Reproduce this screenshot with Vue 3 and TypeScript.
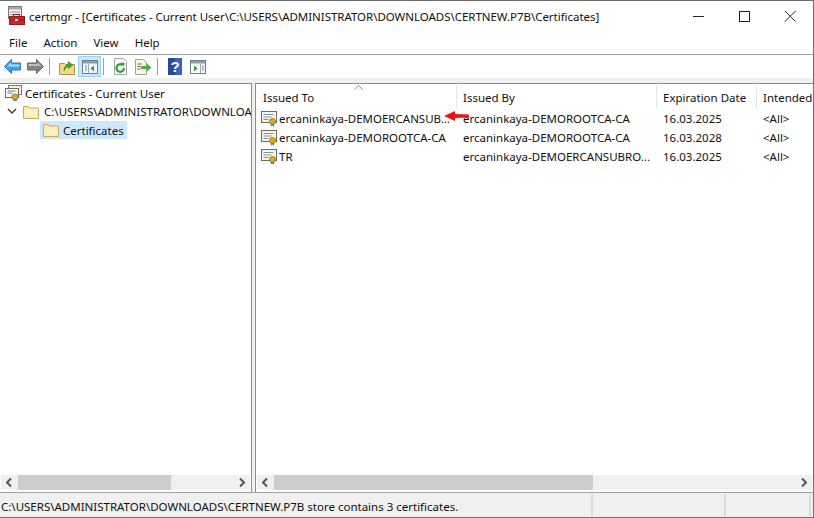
<script setup lang="ts">
const menus: string[] = ['File', 'Action', 'View', 'Help']
const rows = [
  { to: 'ercaninkaya-DEMOERCANSUB...', by: 'ercaninkaya-DEMOROOTCA-CA', date: '16.03.2025' },
  { to: 'ercaninkaya-DEMOROOTCA-CA', by: 'ercaninkaya-DEMOROOTCA-CA', date: '16.03.2028' },
  { to: 'TR', by: 'ercaninkaya-DEMOERCANSUBRO...', date: '16.03.2025' },
]
</script>

<template>
  <div class="window">
    <header class="titlebar">
      <svg class="appicon" width="20" height="20" viewBox="0 0 20 20">
        <rect x="1.5" y="0.5" width="13" height="12" fill="#f2f2f2" stroke="#777" />
        <rect x="2" y="1" width="12" height="2.5" fill="#aaa" />
        <path d="M3 6h10M3 8.500h10" stroke="#999" />
        <path d="M6.500 10.500V8.500h6v2" fill="none" stroke="#7d1717" />
        <rect x="2.500" y="10.500" width="15" height="8" fill="#c22a2a" stroke="#8e1a1a" />
        <path d="M3 14h14" stroke="#8e1a1a" />
        <rect x="8" y="13" width="3" height="2" fill="#f0d0b0" />
      </svg>
      <span class="title">certmgr - [Certificates - Current User\C:\USERS\ADMINISTRATOR\DOWNLOADS\CERTNEW.P7B\Certificates]</span>
      <div class="winbtns">
        <svg width="46" height="30" viewBox="0 0 46 30"><path d="M18 15.500h11" stroke="#222" /></svg>
        <svg width="46" height="30" viewBox="0 0 46 30"><rect x="18.500" y="10.500" width="10" height="10" fill="none" stroke="#222" /></svg>
        <svg width="46" height="30" viewBox="0 0 46 30"><path d="M18 10l10.500 10.500M28.500 10L18 20.500" stroke="#222" fill="none" /></svg>
      </div>
    </header>

    <nav class="menubar">
      <span v-for="m in menus" :key="m" class="menu">{{ m }}</span>
    </nav>

    <div class="toolbar">
      <span class="tool">
        <svg width="17" height="15" viewBox="0 0 17 15">
          <path d="M0.500 7.500L7.500 0.500v3.500h9v7h-9v3.500z" fill="#3f9fe8" stroke="#2a78c0" />
          <path d="M3 7.500l4-4v2h8.500v2z" fill="#b0e0fa" />
        </svg>
      </span>
      <span class="tool">
        <svg width="17" height="15" viewBox="0 0 17 15">
          <path d="M16.500 7.500L9.500 0.500v3.500h-9v7h9v3.500z" fill="#868686" stroke="#666" />
          <path d="M1.500 5h9V3l3.500 4H1.500z" fill="#c0c0c0" />
        </svg>
      </span>
      <span class="sep"></span>
      <span class="tool">
        <svg width="16" height="16" viewBox="0 0 16 16">
          <path d="M0.500 4.500h5l1 1h9v10h-15z" fill="#f4d883" stroke="#b0924a" />
          <path d="M5 12c0-4 2-6 4-6.500V2.500l5 3.500-4.500 3.500V7.500C7.500 8 6 9.500 5 12z" fill="#3fa83a" stroke="#2a7a28" stroke-width="0.5" />
        </svg>
      </span>
      <span class="tool active">
        <svg width="16" height="14" viewBox="0 0 16 14">
          <rect x="0.500" y="0.500" width="15" height="13" fill="#f4f8fb" stroke="#6f7f8c" />
          <rect x="1" y="1" width="14" height="2.500" fill="#8f9ba6" />
          <path d="M3 6h2M3 8h2M3 10h2" stroke="#4f8fc0" />
          <path d="M6.500 3.500v10" stroke="#9aa7b2" />
          <path d="M12 5.500v6l-3.500-3z" fill="#2f9e3a" />
        </svg>
      </span>
      <span class="sep"></span>
      <span class="tool">
        <svg width="15" height="17" viewBox="0 0 15 17">
          <path d="M1.500 0.500h9l3 3v13h-12z" fill="#fbfbf6" stroke="#a5a5a5" />
          <path d="M11 10a3.800 3.800 0 1 1-1.500-3" fill="none" stroke="#2f9e3a" stroke-width="2.200" />
          <path d="M8 4.500l3.800 0.500-1 3.800z" fill="#2f9e3a" />
        </svg>
      </span>
      <span class="tool">
        <svg width="17" height="16" viewBox="0 0 17 16">
          <path d="M0.500 0.500h8l3 3v12h-11z" fill="#fbf6e0" stroke="#a5a08a" />
          <path d="M2.500 5h4M2.500 7.500h3M2.500 10h3" stroke="#666" />
          <path d="M6 7h5.500V4l5 4.500-5 4.500v-3H6z" fill="#47b04a" />
        </svg>
      </span>
      <span class="sep"></span>
      <span class="tool">
        <svg width="14" height="17" viewBox="0 0 14 17">
          <rect width="14" height="17" fill="#26489c" />
          <rect x="7" width="7" height="17" fill="#3d63c0" />
          <text x="7" y="14" text-anchor="middle" class="qmark">?</text>
        </svg>
      </span>
      <span class="tool">
        <svg width="16" height="14" viewBox="0 0 16 14">
          <rect x="0.500" y="0.500" width="15" height="13" fill="#fff" stroke="#6f7f8c" />
          <rect x="1" y="1" width="14" height="2.500" fill="#8f9ba6" />
          <path d="M10.500 3.500v10" stroke="#9aa7b2" />
          <path d="M12 6h2M12 8h2M12 10h2" stroke="#4f8fc0" />
          <path d="M4 5.500v6l3.500-3z" fill="#2f9e3a" />
        </svg>
      </span>
    </div>

    <div class="panes">
      <section class="pane left">
        <div class="tree">
          <div class="node root">
            <svg class="cert" width="18" height="17" viewBox="0 0 18 17">
              <rect x="3.500" y="0.500" width="13" height="9" fill="#f6f0d8" stroke="#8a7a4a" />
              <rect x="0.500" y="3.500" width="13" height="9" fill="#f8f8f8" stroke="#6f6a5a" />
              <path d="M2.500 6h8M2.500 8h5" stroke="#5a86b8" />
              <circle cx="10" cy="12" r="3" fill="#e5a824" stroke="#a8780c" />
              <path d="M8.500 14.500v2l1.500-1 1.500 1v-2" fill="#3c78c8" />
            </svg>
            <span>Certificates - Current User</span>
          </div>
          <div class="node store">
            <svg class="chev" width="10" height="7" viewBox="0 0 10 7"><path d="M1 1l4 4 4-4" fill="none" stroke="#444" stroke-width="1.500" /></svg>
            <svg class="folder" width="16" height="14" viewBox="0 0 16 14">
              <path d="M0.500 1.500h5l1 1.500h9v10.500H.5z" fill="#fbe6a6" stroke="#c9ac62" />
              <rect x="1.500" y="4" width="13" height="8.500" fill="#fdf0c4" />
            </svg>
            <span class="clip">C:\USERS\ADMINISTRATOR\DOWNLOADS\CERTNEW.P7B</span>
          </div>
          <div class="node leaf">
            <span class="selected">
              <svg class="folder" width="16" height="14" viewBox="0 0 16 14">
                <path d="M0.500 1.500h5l1 1.500h9v10.500H.5z" fill="#fbe6a6" stroke="#c9ac62" />
                <rect x="1.500" y="4" width="13" height="8.500" fill="#fdf0c4" />
              </svg>
              <span>Certificates</span>
            </span>
          </div>
        </div>
        <div class="hscroll">
          <svg class="sarrow" width="17" height="15" viewBox="0 0 17 15"><path d="M10 3.500l-4 4 4 4" fill="none" stroke="#555" stroke-width="2" /></svg>
          <div class="track"><div class="thumb tree-thumb"></div></div>
          <svg class="sarrow" width="17" height="15" viewBox="0 0 17 15"><path d="M7 3.500l4 4-4 4" fill="none" stroke="#555" stroke-width="2" /></svg>
        </div>
      </section>

      <section class="pane right">
        <div class="list">
          <div class="thead">
            <svg class="sort" width="9" height="5" viewBox="0 0 9 5"><path d="M0.500 4.500l4-4 4 4" fill="none" stroke="#8a8a8a" /></svg>
            <div class="th c1">Issued To</div>
            <div class="th c2">Issued By</div>
            <div class="th c3">Expiration Date</div>
            <div class="th c4 last">Intended</div>
          </div>
          <div v-for="r in rows" :key="r.to" class="tr">
            <div class="td c1 first">
              <svg class="cert" width="17" height="17" viewBox="0 0 17 17">
                <rect x="0.500" y="1.500" width="15" height="11" fill="#f7f5ea" stroke="#6f6a5a" />
                <path d="M2.500 4.500h10M2.500 7h8M2.500 9.500h5" stroke="#7d94b0" />
                <circle cx="11.500" cy="11.500" r="3" fill="#e5a824" stroke="#a8780c" />
                <path d="M10 14v2.500l1.500-1 1.500 1V14" fill="#3c78c8" />
              </svg>
              <span>{{ r.to }}</span>
            </div>
            <div class="td c2">{{ r.by }}</div>
            <div class="td c3">{{ r.date }}</div>
            <div class="td c4">&lt;All&gt;</div>
          </div>
          <svg class="redarrow" width="25" height="10" viewBox="0 0 25 10">
            <path d="M0 5l11-5v3l14 .5v3L11 7v3z" fill="#ee1111" />
          </svg>
        </div>
        <div class="hscroll">
          <svg class="sarrow" width="17" height="15" viewBox="0 0 17 15"><path d="M10 3.500l-4 4 4 4" fill="none" stroke="#555" stroke-width="2" /></svg>
          <div class="track"><div class="thumb list-thumb"></div></div>
          <svg class="sarrow" width="17" height="15" viewBox="0 0 17 15"><path d="M7 3.500l4 4-4 4" fill="none" stroke="#555" stroke-width="2" /></svg>
        </div>
      </section>
    </div>

    <footer class="statusbar">
      <span class="status main">C:\USERS\ADMINISTRATOR\DOWNLOADS\CERTNEW.P7B store contains 3 certificates.</span>
      <span class="status s2"></span>
      <span class="status s3"></span>
    </footer>
  </div>
</template>

<style>
html, body { margin: 0; padding: 0; background: #fff; }
</style>

<style scoped>
.window {
  box-sizing: border-box;
  width: 814px;
  height: 518px;
  display: flex;
  flex-direction: column;
  background: #f0f0f0;
  border-top: 1px solid #6d6d6d;
  border-right: 1px solid #6d6d6d;
  border-bottom: 1px solid #6d6d6d;
  font-family: "Noto Sans", "Open Sans", sans-serif;
  font-size: 11.5px;
  color: #111;
  overflow: hidden;
}
.titlebar {
  height: 30px;
  flex: none;
  display: flex;
  align-items: center;
  background: #fff;
  padding-left: 7px;
}
.appicon { flex: none; margin-right: 2px; margin-top: -1px; }
.title { flex: 1; white-space: nowrap; overflow: hidden; letter-spacing: -0.03px; }
.winbtns { display: flex; flex: none; }
.winbtns svg { display: block; }
.menubar {
  height: 23px;
  flex: none;
  display: flex;
  align-items: center;
  gap: 16px;
  padding-left: 9px;
  background: #fff;
  border-bottom: 1px solid #a0a0a0;
}
.toolbar {
  height: 23px;
  flex: none;
  display: flex;
  align-items: center;
  background: #fff;
  padding-left: 1px;
}
.tool {
  width: 23px;
  height: 21px;
  box-sizing: border-box;
  display: flex;
  align-items: center;
  justify-content: center;
}
.tool.active { background: #cce8ff; border: 1px solid #99d1ff; }
.sep { width: 1px; height: 17px; background: #a0a0a0; margin: 0 5px 0 2px; }
.qmark { font-family: "Liberation Sans", sans-serif; font-size: 15px; font-weight: 700; fill: #fff; }
.panes {
  flex: 1;
  display: flex;
  gap: 3px;
  padding-top: 5px;
  min-height: 0;
}
.pane {
  box-sizing: border-box;
  display: flex;
  flex-direction: column;
  background: #fff;
  border: 1px solid #8c8c8c;
  border-bottom: 0;
  min-width: 0;
}
.left { width: 252px; border-left: 0; flex: none; }
.right { flex: 1; border-right: 0; }
.tree { flex: 1; overflow: hidden; }
.node { height: 18.500px; display: flex; align-items: center; white-space: nowrap; }
.root { padding-left: 5px; gap: 2px; }
.store { padding-left: 7px; }
.chev { flex: none; margin-right: 6px; }
.store .folder { flex: none; margin-right: 5px; }
.clip { overflow: hidden; flex: 1; min-width: 0; }
.leaf { padding-left: 40px; }
.selected {
  display: flex;
  align-items: center;
  gap: 4px;
  height: 18px;
  padding: 0 3px;
  background: #cce8ff;
}
.list { flex: 1; position: relative; overflow: hidden; }
.thead { display: flex; height: 25px; position: relative; }
.sort { position: absolute; left: 98px; top: 1px; }
.th {
  box-sizing: border-box;
  display: flex;
  align-items: center;
  padding-left: 6px;
  padding-top: 2px;
  border-right: 1px solid #e5e5e5;
  margin-top: 1px;
  white-space: nowrap;
  overflow: hidden;
  height: 23px;
}
.th.c1 { padding-left: 7px; }
.th.last { border-right: 0; }
.c1 { width: 201px; flex: none; }
.c2 { width: 200px; flex: none; }
.c3 { width: 100px; flex: none; }
.c4 { flex: 1; min-width: 0; }
.tr { display: flex; height: 19px; }
.td {
  box-sizing: border-box;
  display: flex;
  align-items: center;
  padding-left: 6px;
  white-space: nowrap;
  overflow: hidden;
}
.td.first { padding-left: 5px; gap: 1px; }
.redarrow { position: absolute; left: 188px; top: 27px; }
.hscroll {
  height: 15px;
  flex: none;
  display: flex;
  background: #f0f0f0;
  margin: 0 1px 2px;
}
.sarrow { flex: none; }
.track { flex: 1; min-width: 0; }
.thumb { height: 100%; background: #cdcdcd; }
.tree-thumb { width: 153px; }
.list-thumb { width: 319px; }
.statusbar {
  height: 24px;
  flex: none;
  display: flex;
  background: #f0f0f0;
  border-top: 1px solid #a0a0a8;
}
.status {
  box-sizing: border-box;
  display: flex;
  align-items: center;
  border-right: 2px solid #dcdcdc;
  margin: 1px 0;
  padding-top: 2px;
  white-space: nowrap;
  overflow: hidden;
}
.main { width: 593px; padding-left: 1px; }
.s2 { width: 133px; }
.s3 { width: 85px; }
</style>
